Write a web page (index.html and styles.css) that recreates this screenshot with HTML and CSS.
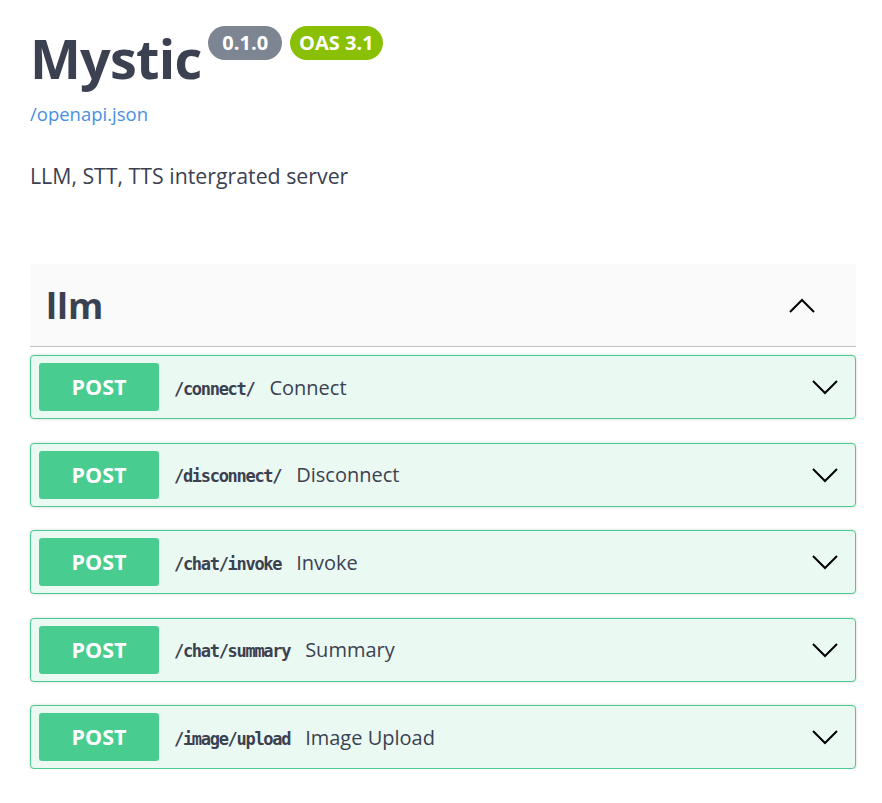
FILE: index.html
```html
<!DOCTYPE html>
<html>
<head>
<meta charset="utf-8">
<link rel="stylesheet" href="styles.css">
</head>
<body>
<div class="page">
  <div class="info">
    <div class="title-row">
      <h1 class="title">Mystic</h1>
      <span class="badge badge-version">0.1.0</span>
      <span class="badge badge-oas">OAS 3.1</span>
    </div>
    <a class="spec-link" href="#">/openapi.json</a>
    <p class="description">LLM, STT, TTS intergrated server</p>
  </div>

  <section class="tag-section">
    <div class="tag-header">
      <h3 class="tag-name">llm</h3>
      <svg class="chev" width="28" height="16" viewBox="0 0 28 16"><polyline points="2,14 14,2 26,14" fill="none" stroke="#000" stroke-width="2"/></svg>
    </div>
    <div class="ops">
      <div class="op">
        <span class="method">POST</span>
        <span class="path">/connect/</span>
        <span class="summary">Connect</span>
        <svg class="chev-down" width="28" height="16" viewBox="0 0 28 16"><polyline points="2,2 14,14 26,2" fill="none" stroke="#000" stroke-width="2"/></svg>
      </div>
      <div class="op">
        <span class="method">POST</span>
        <span class="path">/disconnect/</span>
        <span class="summary">Disconnect</span>
        <svg class="chev-down" width="28" height="16" viewBox="0 0 28 16"><polyline points="2,2 14,14 26,2" fill="none" stroke="#000" stroke-width="2"/></svg>
      </div>
      <div class="op">
        <span class="method">POST</span>
        <span class="path">/chat/invoke</span>
        <span class="summary">Invoke</span>
        <svg class="chev-down" width="28" height="16" viewBox="0 0 28 16"><polyline points="2,2 14,14 26,2" fill="none" stroke="#000" stroke-width="2"/></svg>
      </div>
      <div class="op">
        <span class="method">POST</span>
        <span class="path">/chat/summary</span>
        <span class="summary">Summary</span>
        <svg class="chev-down" width="28" height="16" viewBox="0 0 28 16"><polyline points="2,2 14,14 26,2" fill="none" stroke="#000" stroke-width="2"/></svg>
      </div>
      <div class="op">
        <span class="method">POST</span>
        <span class="path">/image/upload</span>
        <span class="summary">Image Upload</span>
        <svg class="chev-down" width="28" height="16" viewBox="0 0 28 16"><polyline points="2,2 14,14 26,2" fill="none" stroke="#000" stroke-width="2"/></svg>
      </div>
    </div>
  </section>
</div>
</body>
</html>
```

FILE: styles.css
```css
* { box-sizing: border-box; }
html, body { margin: 0; padding: 0; background: #fff; }
body {
  font-family: "Open Sans", "Noto Sans", sans-serif;
  color: #3b4151;
}
.page {
  width: 826px;
  margin-left: 30px;
  padding-top: 18px;
}
.title-row {
  display: flex;
  align-items: flex-start;
  height: 80px;
}
.title {
  margin: 0;
  font-size: 54px;
  font-weight: 700;
  line-height: 80px;
  color: #3b4151;
  letter-spacing: -0.8px;
}
.badge {
  margin-top: 8px;
  height: 34px;
  line-height: 34px;
  border-radius: 17px;
  font-size: 20px;
  font-weight: 700;
  color: #fff;
}
.badge-version { background: #7d8492; margin-left: 7px; padding: 0 14px; }
.badge-oas { background: #89bf04; margin-left: 8px; padding: 0 9px; }
.spec-link {
  display: block;
  margin-top: 3px;
  font-size: 18.5px;
  line-height: 26px;
  color: #4990e2;
  text-decoration: none;
}
.description {
  margin: 35px 0 0;
  font-size: 21.3px;
  line-height: 28px;
}
.tag-section { margin-top: 74px; }
.tag-header {
  display: flex;
  align-items: center;
  justify-content: space-between;
  height: 83px;
  background: #fafafa;
  border-bottom: 1px solid rgba(59,65,81,.3);
  padding: 0 40px 0 16px;
}
.tag-name {
  margin: 0;
  font-size: 36px;
  font-weight: 700;
  color: #3b4151;
}
.chev { margin-top: 2px; }
.ops {
  display: flex;
  flex-direction: column;
  gap: 23.5px;
  padding-top: 8px;
}
.op {
  display: flex;
  align-items: center;
  height: 64px;
  padding: 7px 16px 7px 8px;
  background: #ebf9f3;
  border: 1px solid #49cc90;
  border-radius: 4px;
  box-shadow: 0 0 3px rgba(0,0,0,.19);
}
.method {
  width: 120px;
  height: 48px;
  line-height: 48px;
  text-align: center;
  background: #49cc90;
  color: #fff;
  border-radius: 3px;
  font-size: 21.5px;
  font-weight: 700;
}
.path {
  margin-left: 15px;
  padding-top: 3px;
  font-family: "DejaVu Sans Mono", monospace;
  font-weight: 700;
  font-size: 17px;
  letter-spacing: -1.3px;
  color: #3b4151;
}
.summary {
  margin-left: 15px;
  font-size: 20px;
  color: #3b4151;
  flex: 1;
}
.chev-down { flex: none; }
```
